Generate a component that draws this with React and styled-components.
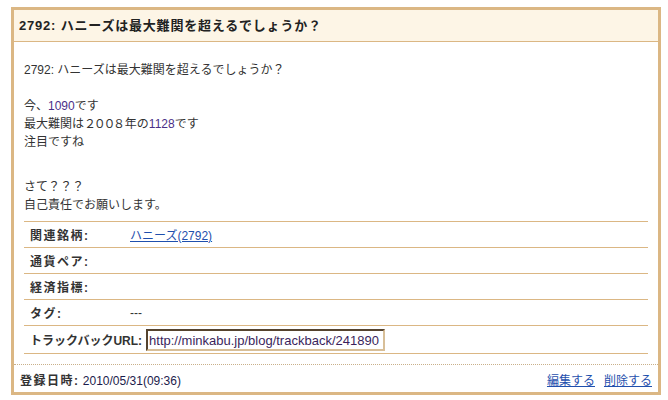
import React from 'react';
import styled, { createGlobalStyle } from 'styled-components';

const Global = createGlobalStyle`
  body {
    margin: 0;
    background: #fff;
    font-family: "Liberation Sans", "Noto Sans CJK JP", sans-serif;
    color: #333;
  }
`;

const Page = styled.div`
  padding: 7px 0 0 11px;
`;

const Entry = styled.article`
  width: 650px;
  box-sizing: border-box;
  border: 3px solid #dbb784;
  background: #fff;
`;

const Title = styled.h2`
  margin: 0;
  height: 31px;
  line-height: 31px;
  padding-left: 5px;
  background: #fdf5e6;
  border-bottom: 1px solid #dbb784;
  font-size: 13px;
  font-weight: bold;
  letter-spacing: 0.8px;
  color: #222;
`;

const Body = styled.div`
  padding: 19px 10px 10px 10px;
`;

const Para = styled.p`
  margin: ${(p) => p.$gap || 0}px 0 0;
  font-size: 12px;
  line-height: 18px;
`;

const Num = styled.span`
  color: #4b2f88;
`;

const WideNum = styled.span`
  letter-spacing: -2.3px;
  margin-right: 2px;
`;

const Details = styled.div`
  margin-top: 7px;
  border-top: 1px solid #dbb784;
`;

const Row = styled.div`
  display: flex;
  align-items: center;
  min-height: ${(p) => p.$h || 25}px;
  padding-left: 6px;
  border-bottom: 1px solid #dbb784;
  font-size: 12px;
`;

const Label = styled.span`
  min-width: 100px;
  box-sizing: border-box;
  padding-right: 4px;
  font-weight: bold;
  letter-spacing: ${(p) => (p.$tight ? 0 : 1.5)}px;
  color: #333;
`;

const Value = styled.span`
  color: #333;
`;

const Link = styled.a`
  color: #1f4fad;
  text-decoration: underline;
  font-size: 12px;
  cursor: pointer;
`;

const UrlBox = styled.input`
  width: 239px;
  height: 22px;
  box-sizing: border-box;
  padding: 2px 1px 0;
  border: 2px solid;
  border-color: #55432e #d8bf98 #d8bf98 #55432e;
  font-family: "Liberation Sans", Arial, sans-serif;
  font-size: 13px;
  color: #3a1f5c;
  background: #fff;
  outline: none;
`;

const Footer = styled.div`
  display: flex;
  align-items: center;
  justify-content: space-between;
  padding: 7px 6px 2px;
  line-height: 18px;
  border-top: 1px dotted #c9b08a;
  font-size: 12px;
`;

const Stamp = styled.div`
  b {
    color: #333;
    letter-spacing: 1.5px;
  }
  span {
    color: #1c1c4c;
  }
`;

const Actions = styled.div`
  display: flex;
  gap: 9px;
`;

export default function App() {
  return (
    <Page>
      <Global />
      <Entry>
        <Title>2792: ハニーズは最大難関を超えるでしょうか？</Title>
        <Body>
          <Para>2792: ハニーズは最大難関を超えるでしょうか？</Para>
          <Para $gap={18}>
            今、<Num>1090</Num>です<br />
            最大難関は<WideNum>２００８</WideNum>年の<Num>1128</Num>です<br />
            注目ですね
          </Para>
          <Para $gap={27}>
            さて？？？<br />
            自己責任でお願いします。
          </Para>
          <Details>
            <Row>
              <Label>関連銘柄:</Label>
              <Link>ハニーズ(2792)</Link>
            </Row>
            <Row>
              <Label>通貨ペア:</Label>
            </Row>
            <Row>
              <Label>経済指標:</Label>
            </Row>
            <Row>
              <Label>タグ:</Label>
              <Value>---</Value>
            </Row>
            <Row $h={27}>
              <Label $tight>トラックバックURL:</Label>
              <UrlBox readOnly value="http://minkabu.jp/blog/trackback/241890" />
            </Row>
          </Details>
        </Body>
        <Footer>
          <Stamp>
            <b>登録日時:</b> <span>2010/05/31(09:36)</span>
          </Stamp>
          <Actions>
            <Link>編集する</Link>
            <Link>削除する</Link>
          </Actions>
        </Footer>
      </Entry>
    </Page>
  );
}
